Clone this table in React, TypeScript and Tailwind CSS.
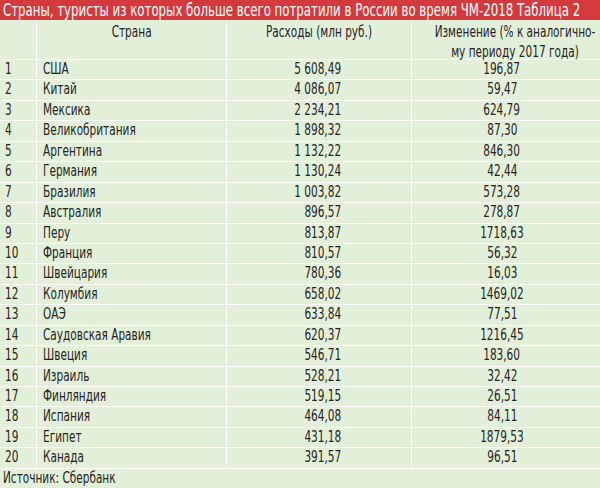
import React from "react";

const rows: [string, string, string, string][] = [
  ["1", "США", "5 608,49", "196,87"],
  ["2", "Китай", "4 086,07", "59,47"],
  ["3", "Мексика", "2 234,21", "624,79"],
  ["4", "Великобритания", "1 898,32", "87,30"],
  ["5", "Аргентина", "1 132,22", "846,30"],
  ["6", "Германия", "1 130,24", "42,44"],
  ["7", "Бразилия", "1 003,82", "573,28"],
  ["8", "Австралия", "896,57", "278,87"],
  ["9", "Перу", "813,87", "1718,63"],
  ["10", "Франция", "810,57", "56,32"],
  ["11", "Швейцария", "780,36", "16,03"],
  ["12", "Колумбия", "658,02", "1469,02"],
  ["13", "ОАЭ", "633,84", "77,51"],
  ["14", "Саудовская Аравия", "620,37", "1216,45"],
  ["15", "Швеция", "546,71", "183,60"],
  ["16", "Израиль", "528,21", "32,42"],
  ["17", "Финляндия", "519,15", "26,51"],
  ["18", "Испания", "464,08", "84,11"],
  ["19", "Египет", "431,18", "1879,53"],
  ["20", "Канада", "391,57", "96,51"],
];

function L({ children }: { children: React.ReactNode }) {
  return <span className="inline-block whitespace-nowrap scale-x-[0.78] origin-left">{children}</span>;
}
function R({ children }: { children: React.ReactNode }) {
  return <span className="inline-block whitespace-nowrap scale-x-[0.78] origin-right">{children}</span>;
}
function C({ children }: { children: React.ReactNode }) {
  return <span className="inline-block whitespace-nowrap scale-x-[0.78] origin-center">{children}</span>;
}

export default function App() {
  return (
    <div
      className="w-[600px] h-[488px] bg-[#e2f0da] text-[#262324] overflow-hidden flex flex-col"
      style={{ fontFamily: '"DejaVu Sans Condensed", "DejaVu Sans", sans-serif' }}
    >
      <div className="h-[20px] bg-[#d33a3e] text-white text-[17px] leading-[20px] pl-[3px] whitespace-nowrap overflow-hidden">
        <span className="inline-block whitespace-nowrap scale-x-[0.77] origin-left">
          Страны, туристы из которых больше всего потратили в России во время ЧМ-2018 Таблица 2
        </span>
      </div>
      <div className="grid grid-cols-[37px_190px_185px_1fr] h-[39px] text-[15px] leading-[20px]">
        <div className="border-r border-white" />
        <div className="border-r border-white text-center pt-[2px]">
          <C>Страна</C>
        </div>
        <div className="border-r border-white text-center pt-[2px]">
          <C>Расходы (млн руб.)</C>
        </div>
        <div className="text-center pt-[2px] pr-[8px]">
          <C>
            Изменение (% к аналогично-
            <br />
            му периоду 2017 года)
          </C>
        </div>
      </div>
      {rows.map((r) => (
        <div
          key={r[0]}
          className="grid grid-cols-[37px_190px_185px_1fr] h-[20.45px] border-t border-white text-[15px] leading-[19.45px]"
        >
          <div className="border-r border-white pl-[5px]">
            <L>{r[0]}</L>
          </div>
          <div className="border-r border-white pl-[6px]">
            <L>{r[1]}</L>
          </div>
          <div className="border-r border-white text-right pr-[70px]">
            <R>{r[2]}</R>
          </div>
          <div className="text-center pr-[8px]">
            <C>{r[3]}</C>
          </div>
        </div>
      ))}
      <div className="flex-1 border-t border-white pl-[3px] text-[15px] leading-[19px]">
        <L>Источник: Сбербанк</L>
      </div>
    </div>
  );
}
